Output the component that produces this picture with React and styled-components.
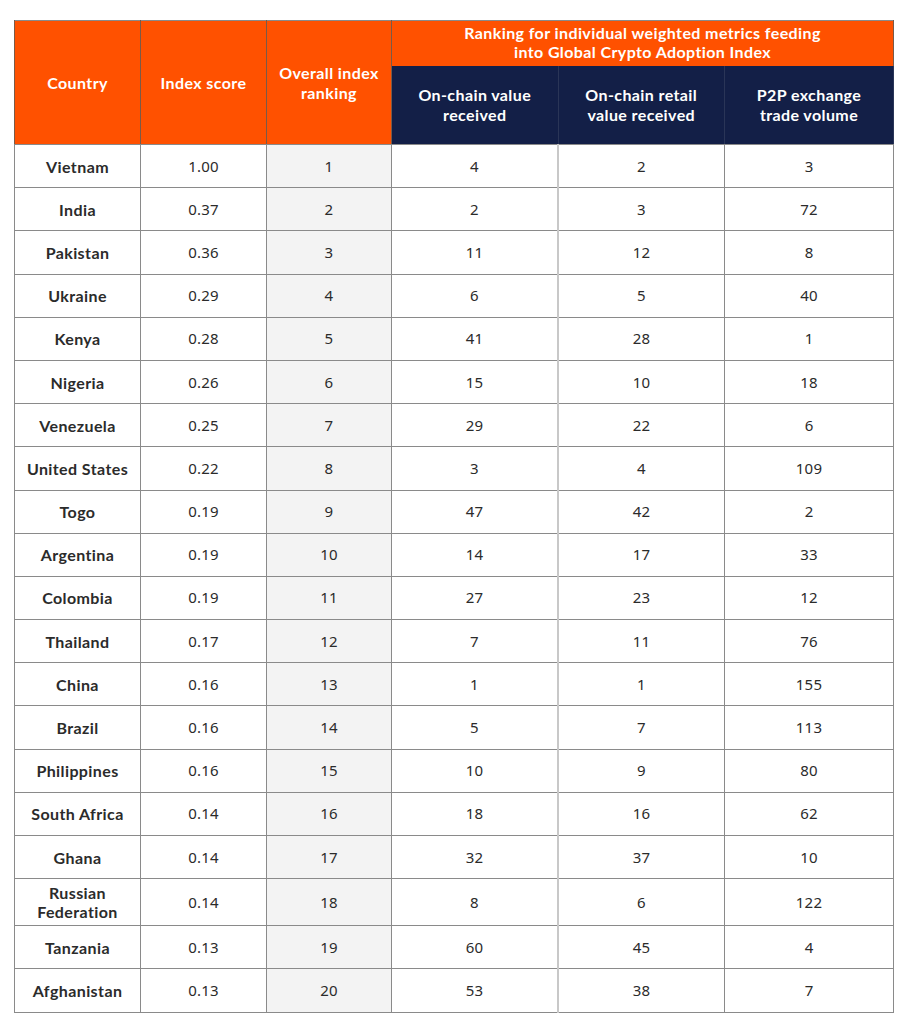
import React from "react";
import styled, { createGlobalStyle } from "styled-components";

const Global = createGlobalStyle`
  html, body { margin: 0; padding: 0; background: #ffffff; }
  body { font-family: "Lato", "Noto Sans", sans-serif; color: #2b2b2b; }
`;

const Page = styled.div`
  padding: 20px 0 16px 14px;
`;

const Table = styled.table`
  border-collapse: collapse;
  table-layout: fixed;
  width: 879px;
  border: 1px solid #8a8a8a;
`;

const HeadCell = styled.th`
  background: ${(p) => (p.$navy ? "#131f47" : "#ff5100")};
  color: #ffffff;
  font-family: "Lato", sans-serif;
  font-weight: 700;
  font-size: 16px;
  line-height: ${(p) => (p.$top ? "19px" : "20px")};
  letter-spacing: 0.4px;
  text-align: center;
  vertical-align: middle;
  padding: ${(p) => (p.$top ? "0 6px 4px" : "0 6px")};
  height: ${(p) => p.$h}px;
  border-left: 1px solid ${(p) => (p.$navy ? "#2a3557" : "#7a5a48")};
  border-right: 1px solid ${(p) => (p.$navy ? "#2a3557" : "#7a5a48")};
  border-bottom: ${(p) => (p.$top ? "none" : "1px solid #8a8a8a")};
`;

const Cell = styled.td`
  height: ${(p) => (p.$tall ? 36 : 34.2)}px;
  padding: 4px 6px;
  line-height: 19px;
  text-align: center;
  vertical-align: middle;
  font-family: ${(p) => (p.$country ? '"Lato", sans-serif' : '"Noto Sans", sans-serif')};
  font-weight: ${(p) => (p.$country ? 700 : 400)};
  font-size: ${(p) => (p.$country ? 16 : 15)}px;
  letter-spacing: ${(p) => (p.$country ? "0.4px" : "0.2px")};
  color: #2b2b2b;
  background: ${(p) => (p.$shade ? "#f3f3f3" : "#ffffff")};
  border: 1px solid #8a8a8a;
  border-right-color: ${(p) => (p.$light ? "#c8c8c8" : "#8a8a8a")};
  border-right-width: ${(p) => (p.$light ? "2px" : "1px")};
`;

const rows = [
  ["Vietnam", "1.00", 1, 4, 2, 3],
  ["India", "0.37", 2, 2, 3, 72],
  ["Pakistan", "0.36", 3, 11, 12, 8],
  ["Ukraine", "0.29", 4, 6, 5, 40],
  ["Kenya", "0.28", 5, 41, 28, 1],
  ["Nigeria", "0.26", 6, 15, 10, 18],
  ["Venezuela", "0.25", 7, 29, 22, 6],
  ["United States", "0.22", 8, 3, 4, 109],
  ["Togo", "0.19", 9, 47, 42, 2],
  ["Argentina", "0.19", 10, 14, 17, 33],
  ["Colombia", "0.19", 11, 27, 23, 12],
  ["Thailand", "0.17", 12, 7, 11, 76],
  ["China", "0.16", 13, 1, 1, 155],
  ["Brazil", "0.16", 14, 5, 7, 113],
  ["Philippines", "0.16", 15, 10, 9, 80],
  ["South Africa", "0.14", 16, 18, 16, 62],
  ["Ghana", "0.14", 17, 32, 37, 10],
  ["Russian Federation", "0.14", 18, 8, 6, 122],
  ["Tanzania", "0.13", 19, 60, 45, 4],
  ["Afghanistan", "0.13", 20, 53, 38, 7],
];

export default function App() {
  return (
    <Page>
      <Global />
      <Table>
        <colgroup>
          <col style={{ width: 126 }} />
          <col style={{ width: 126 }} />
          <col style={{ width: 125 }} />
          <col style={{ width: 166.5 }} />
          <col style={{ width: 166.5 }} />
          <col style={{ width: 169 }} />
        </colgroup>
        <thead>
          <tr>
            <HeadCell rowSpan={2}>Country</HeadCell>
            <HeadCell rowSpan={2}>Index score</HeadCell>
            <HeadCell rowSpan={2}>
              Overall index
              <br />
              ranking
            </HeadCell>
            <HeadCell colSpan={3} $top $h={41}>
              Ranking for individual weighted metrics feeding
              <br />
              into Global Crypto Adoption Index
            </HeadCell>
          </tr>
          <tr>
            <HeadCell $navy $h={78}>
              On-chain value
              <br />
              received
            </HeadCell>
            <HeadCell $navy $h={78}>
              On-chain retail
              <br />
              value received
            </HeadCell>
            <HeadCell $navy $h={78}>
              P2P exchange
              <br />
              trade volume
            </HeadCell>
          </tr>
        </thead>
        <tbody>
          {rows.map((r) => {
            const tall = r[0] === "Russian Federation";
            return (
              <tr key={r[0]}>
                <Cell $country $tall={tall}>
                  {tall ? (
                    <>
                      Russian
                      <br />
                      Federation
                    </>
                  ) : (
                    r[0]
                  )}
                </Cell>
                <Cell $tall={tall}>{r[1]}</Cell>
                <Cell $tall={tall} $shade>
                  {r[2]}
                </Cell>
                <Cell $tall={tall} $light>
                  {r[3]}
                </Cell>
                <Cell $tall={tall}>{r[4]}</Cell>
                <Cell $tall={tall}>{r[5]}</Cell>
              </tr>
            );
          })}
        </tbody>
      </Table>
    </Page>
  );
}
